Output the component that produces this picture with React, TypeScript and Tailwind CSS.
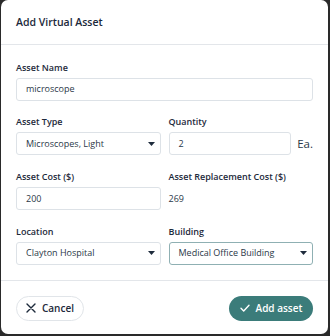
import React from "react";

const font = { fontFamily: '"Open Sans", "Noto Sans", sans-serif' };

function Caret() {
  return (
    <svg width="7" height="4" viewBox="0 0 7 4" className="shrink-0">
      <path d="M0 0 L7 0 L3.5 4 Z" fill="#1e2b3c" />
    </svg>
  );
}

function Label({ children }: { children: React.ReactNode }) {
  return (
    <div className="text-[9px] font-semibold leading-[13px] text-[#1d2a3b] mb-[4px] whitespace-nowrap">
      {children}
    </div>
  );
}

function Input({ value, className = "" }: { value: string; className?: string }) {
  return (
    <div
      className={
        "h-[23px] border border-[#dde2e7] rounded-[3px] bg-white flex items-center pl-[9px] text-[9px] text-[#2b3848] " +
        className
      }
    >
      {value}
    </div>
  );
}

function Select({ value, focused = false }: { value: string; focused?: boolean }) {
  return (
    <div
      className={
        "h-[23px] border rounded-[3px] bg-white flex items-center justify-between pl-[9px] pr-[5px] text-[9px] text-[#2b3848] " +
        (focused ? "border-[#8fb0b3]" : "border-[#dde2e7]")
      }
    >
      <span>{value}</span>
      <Caret />
    </div>
  );
}

export default function App() {
  return (
    <div className="w-[330px] h-[336px] bg-[#2a2a2a] overflow-hidden" style={font}>
      <div className="ml-[1px] w-[327px] h-[334px] bg-white rounded-[7px] flex flex-col overflow-hidden">
        <div className="h-[45px] shrink-0 border-b border-[#e3e6ea] flex items-center px-[15px]">
          <div className="text-[10.5px] font-semibold text-[#1b293b] mt-[1px]">Add Virtual Asset</div>
        </div>
        <div className="px-[15px] pt-[15.5px] flex flex-col gap-[14.7px]">
          <div>
            <Label>Asset Name</Label>
            <Input value="microscope" />
          </div>
          <div className="grid grid-cols-2 gap-x-[8px]">
            <div>
              <Label>Asset Type</Label>
              <Select value="Microscopes, Light" />
            </div>
            <div>
              <Label>Quantity</Label>
              <div className="flex items-center">
                <Input value="2" className="w-[124px]" />
                <span className="ml-[6px] text-[11.5px] text-[#2b3848]">Ea.</span>
              </div>
            </div>
          </div>
          <div className="grid grid-cols-2 gap-x-[8px]">
            <div>
              <Label>Asset Cost ($)</Label>
              <Input value="200" />
            </div>
            <div>
              <Label>Asset Replacement Cost ($)</Label>
              <div className="h-[23px] flex items-center text-[9px] text-[#2b3848]">269</div>
            </div>
          </div>
          <div className="grid grid-cols-2 gap-x-[8px]">
            <div>
              <Label>Location</Label>
              <Select value="Clayton Hospital" />
            </div>
            <div>
              <Label>Building</Label>
              <Select value="Medical Office Building" focused />
            </div>
          </div>
        </div>
        <div className="mt-[15px] border-t border-[#e3e6ea] px-[15px] pt-[15px] flex justify-between items-start">
          <button className="h-[25px] w-[68px] rounded-full border border-[#e1e5e9] bg-white flex items-center justify-center gap-[6px] text-[10px] font-semibold text-[#1d2a3b]">
            <svg width="10" height="10" viewBox="0 0 10 10">
              <path d="M1 1 L9 9 M9 1 L1 9" stroke="#1d2a3b" strokeWidth="1.4" strokeLinecap="round" />
            </svg>
            Cancel
          </button>
          <button className="h-[25px] w-[84px] rounded-full bg-[#3b7c7a] flex items-center justify-center gap-[6px] text-[10px] font-semibold text-white">
            <svg width="10" height="8" viewBox="0 0 10 8">
              <path d="M1 4.2 L3.7 6.9 L9 1.2" stroke="white" strokeWidth="1.4" fill="none" strokeLinecap="round" strokeLinejoin="round" />
            </svg>
            Add asset
          </button>
        </div>
      </div>
    </div>
  );
}
